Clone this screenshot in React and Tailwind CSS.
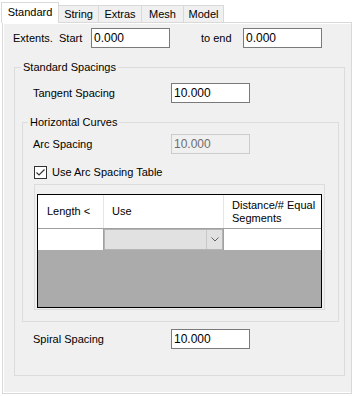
import React from "react";

function TB({ value, disabled }) {
  return (
    <div
      className={`w-[79px] h-[20px] border flex items-center pl-[2px] text-[12px] leading-none ${
        disabled
          ? "border-[#cccccc] bg-[#f0f0f0] text-[#6d6d6d]"
          : "border-[#7a7a7a] bg-white text-black"
      }`}
    >
      {value}
    </div>
  );
}

function Tab({ label, w, selected }) {
  if (selected) {
    return (
      <div
        className={`relative z-10 h-[21px] -mb-[1px] border-l border-t border-r border-[#d9d9d9] bg-white flex items-start justify-center pt-[3px] text-[11px] leading-[13px]`}
        style={{ width: w }}
      >
        {label}
      </div>
    );
  }
  return (
    <div
      className="h-[17px] border-t border-r border-[#d9d9d9] bg-[#f0f0f0] flex items-center justify-center text-[11px] leading-[13px]"
      style={{ width: w }}
    >
      {label}
    </div>
  );
}

export default function App() {
  return (
    <div className="w-[354px] h-[396px] bg-white text-black text-[11px] leading-[13px] font-['Liberation_Sans',Arial,sans-serif] overflow-hidden">
      {/* Tab strip */}
      <div className="flex items-end h-[22px] pl-[1px]">
        <Tab label="Standard" w={58} selected />
        <Tab label="String" w={40} />
        <Tab label="Extras" w={43} />
        <Tab label="Mesh" w={42} />
        <Tab label="Model" w={40} />
      </div>

      {/* Panel */}
      <div className="ml-[2px] w-[350px] h-[372px] border border-[#d9d9d9] bg-white">
        <div className="w-full h-full border-l border-t border-b border-white bg-[#f0f0f0] pt-[4px]">
          {/* Extents row */}
          <div className="flex items-center h-[20px] pl-[9px]">
            <span className="w-[46px]">Extents.</span>
            <span className="w-[32px]">Start</span>
            <TB value="0.000" />
            <span className="w-[31px]" />
            <span className="w-[42px]">to end</span>
            <TB value="0.000" />
          </div>

          {/* Standard Spacings */}
          <fieldset className="ml-[10px] mt-[12px] w-[331px] border border-[#dcdcdc] pb-[26px]">
            <legend className="ml-[6px] px-[2px] leading-[14px]">Standard Spacings</legend>

            <div className="flex items-center h-[20px] mt-[9px] pl-[18px]">
              <span className="w-[138px]">Tangent Spacing</span>
              <TB value="10.000" />
            </div>

            {/* Horizontal Curves */}
            <fieldset className="ml-[7px] mt-[12px] w-[317px] border border-[#dcdcdc] pb-[11px]">
              <legend className="ml-[5px] px-[2px] leading-[14px]">Horizontal Curves</legend>

              <div className="flex items-center h-[20px] mt-[5px] pl-[10px]">
                <span className="w-[138px]">Arc Spacing</span>
                <TB value="10.000" disabled />
              </div>

              <div className="flex items-center h-[13px] mt-[12px] pl-[11px]">
                <div className="w-[13px] h-[13px] border border-[#333333] bg-white flex items-center justify-center">
                  <svg width="11" height="11" viewBox="0 0 11 11">
                    <path d="M1.5 5.5 L4 8 L9.5 2.5" fill="none" stroke="#333333" strokeWidth="1.2" />
                  </svg>
                </div>
                <span className="ml-[5px]">Use Arc Spacing Table</span>
              </div>

              {/* Grid */}
              <div className="ml-[11px] mt-[5px] w-[291px] h-[126px] border border-[#dcdcdc] pt-[9px] px-[2px]">
                <div className="h-[114px] border border-black bg-[#ababab] flex flex-col">
                  <div className="h-[34px] flex bg-white border-b border-[#a0a0a0]">
                    <div className="w-[66px] border-r border-[#e5e5e5] flex items-center pl-[9px]">
                      Length &lt;
                    </div>
                    <div className="w-[120px] border-r border-[#e5e5e5] flex items-center pl-[8px]">
                      Use
                    </div>
                    <div className="flex-1 flex items-center pl-[8px]">
                      <span>
                        Distance/# Equal
                        <br />
                        Segments
                      </span>
                    </div>
                  </div>
                  <div className="h-[21px] flex bg-white">
                    <div className="w-[66px] border-r border-[#a0a0a0]" />
                    <div className="w-[120px] border-r border-[#a0a0a0] flex">
                      <div className="flex-1 h-full border border-[#b4b4b4] bg-[#e1e1e1] flex">
                        <div className="flex-1" />
                        <div className="w-[16px] h-full border-l border-[#c8c8c8] flex items-center justify-center">
                          <svg width="8" height="5" viewBox="0 0 8 5">
                            <path d="M0.5 0.5 L4 4 L7.5 0.5" fill="none" stroke="#606060" strokeWidth="1" />
                          </svg>
                        </div>
                      </div>
                    </div>
                    <div className="flex-1" />
                  </div>
                  <div className="flex-1" />
                </div>
              </div>
            </fieldset>

            <div className="flex items-center h-[20px] mt-[7px] pl-[18px]">
              <span className="w-[138px]">Spiral Spacing</span>
              <TB value="10.000" />
            </div>
          </fieldset>
        </div>
      </div>
    </div>
  );
}
